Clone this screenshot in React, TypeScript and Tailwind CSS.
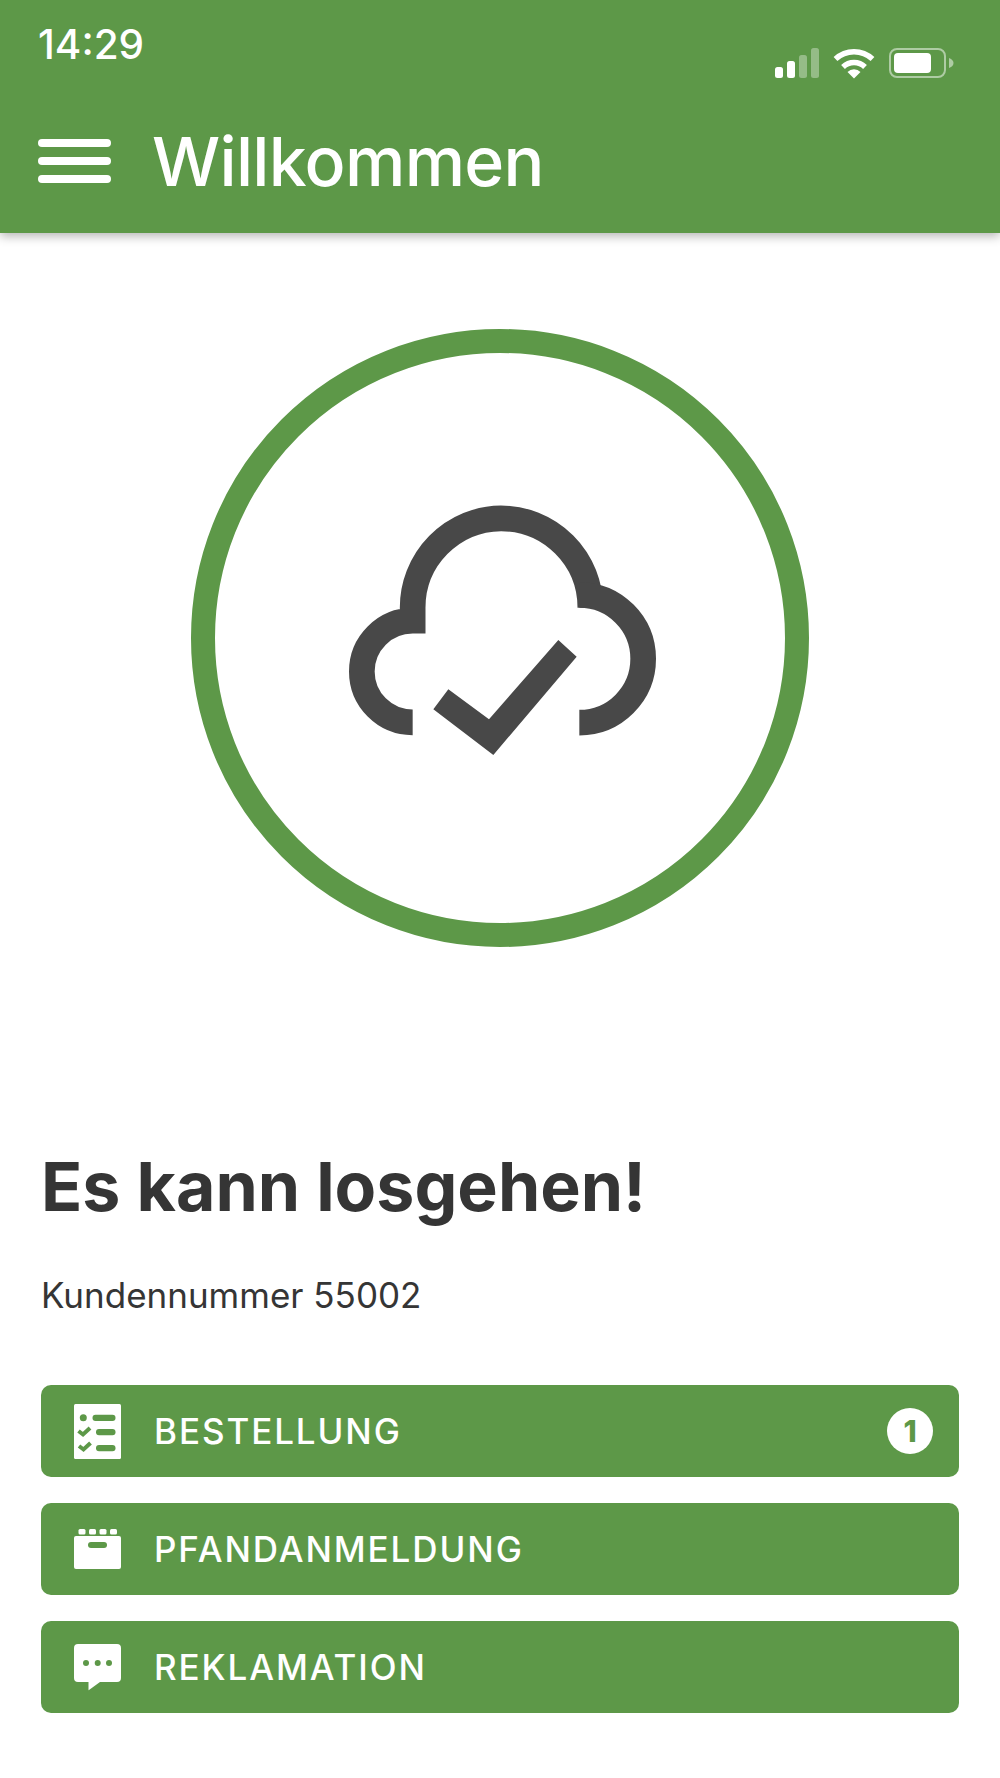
const inter = "font-['Inter','Liberation_Sans',sans-serif]";

function SignalIcon() {
  return (
    <svg width="44" height="30" viewBox="0 0 44 30" fill="white">
      <rect x="0" y="19" width="8" height="11" rx="2.5" />
      <rect x="12" y="13" width="8" height="17" rx="2.5" />
      <rect x="24" y="7" width="8" height="23" rx="2.5" opacity="0.35" />
      <rect x="36" y="0" width="8" height="30" rx="2.5" opacity="0.35" />
    </svg>
  );
}

function WifiIcon() {
  return (
    <svg width="42" height="32" viewBox="0 0 42 32" fill="none" stroke="white" strokeWidth="5.5">
      <path d="M2.5 12 A27 27 0 0 1 39.5 12" />
      <path d="M10 20 A16 16 0 0 1 32 20" />
      <path d="M21 31.5 L14.5 25 A9 9 0 0 1 27.5 25 Z" fill="white" stroke="none" />
    </svg>
  );
}

function BatteryIcon() {
  return (
    <svg width="66" height="30" viewBox="0 0 66 30" fill="none">
      <rect x="1" y="1" width="55" height="28" rx="7" stroke="white" strokeOpacity="0.5" strokeWidth="2" />
      <rect x="5" y="5" width="37" height="20" rx="4" fill="white" />
      <path d="M60 10 C63 11 64.500 13 64.500 15 C64.500 17 63 19 60 20 Z" fill="white" fillOpacity="0.5" />
    </svg>
  );
}

function CloudCheck() {
  return (
    <svg width="360" height="300" viewBox="0 0 1080 900" fill="none" className="mb-[16px]">
      <path
        d="M278 727 A152 152 0 0 1 278 422 L278 385 A268 268 0 0 1 543 115 A268 268 0 0 1 811 383"
        stroke="#484848"
        strokeWidth="77"
      />
      <path d="M778 345 A191 191 0 0 1 778 728" stroke="#484848" strokeWidth="77" />
      <path d="M385 628 L507 718 L715 480 L770 530 L520 825 L340 688 Z" fill="#484848" />
    </svg>
  );
}

function ListIcon() {
  return (
    <svg width="47" height="55" viewBox="0 0 47 55">
      <rect width="47" height="55" rx="1.500" fill="white" />
      <circle cx="9.300" cy="13.700" r="3.500" fill="#5d9848" />
      <rect x="18.500" y="10.700" width="23" height="6.300" rx="3" fill="#5d9848" />
      <path d="M4.500 27 L9 30.500 L16 24" fill="none" stroke="#5d9848" strokeWidth="4" />
      <rect x="22" y="25" width="19.500" height="6.300" rx="3" fill="#5d9848" />
      <path d="M5 42 L9.500 45.500 L16.500 39" fill="none" stroke="#5d9848" strokeWidth="4" />
      <rect x="22" y="41" width="19.500" height="6.300" rx="3" fill="#5d9848" />
    </svg>
  );
}

function CrateIcon() {
  return (
    <svg width="47" height="40" viewBox="0 0 47 40" fill="white">
      <rect x="4.500" y="0" width="7" height="5.500" rx="1.500" />
      <rect x="15" y="0" width="7" height="5.500" rx="1.500" />
      <rect x="25.500" y="0" width="7" height="5.500" rx="1.500" />
      <rect x="36" y="0" width="7" height="5.500" rx="1.500" />
      <path d="M2 7 H45 A2 2 0 0 1 47 9 V38 A2 2 0 0 1 45 40 H2 A2 2 0 0 1 0 38 V9 A2 2 0 0 1 2 7 Z" />
      <rect x="14" y="13" width="19" height="6" rx="3" fill="#5d9848" />
    </svg>
  );
}

function ChatIcon() {
  return (
    <svg width="47" height="47" viewBox="0 0 47 47">
      <path
        d="M4 0 H43 A4 4 0 0 1 47 4 V34 A4 4 0 0 1 43 38 H26 L15 46 Q14.500 47 14.500 45 V38 H4 A4 4 0 0 1 0 34 V4 A4 4 0 0 1 4 0 Z"
        fill="white"
      />
      <circle cx="12" cy="19" r="3" fill="#5d9848" />
      <circle cx="23.700" cy="19" r="3" fill="#5d9848" />
      <circle cx="35" cy="19" r="3" fill="#5d9848" />
    </svg>
  );
}

function ActionButton({
  label,
  icon,
  badge,
}: {
  label: string;
  icon: React.ReactNode;
  badge?: number;
}) {
  return (
    <button className="flex h-[92px] w-full items-center rounded-[10px] bg-[#5d9848] pl-[33px] pr-[26px] text-white">
      <span className="flex w-[80px] shrink-0 justify-start">{icon}</span>
      <span className="text-[35px] font-[450] leading-none tracking-[1.9px]">{label}</span>
      {badge != null && (
        <span className="ml-auto flex h-[46px] w-[46px] items-center justify-center rounded-full bg-white text-[30px] font-extrabold leading-none text-[#5d9848]">
          {badge}
        </span>
      )}
    </button>
  );
}

export default function App() {
  return (
    <div className={`${inter} flex h-[1778px] w-[1000px] flex-col bg-white`}>
      {/* Kopfzeile */}
      <header className="relative h-[233px] shrink-0 bg-[#5d9848] px-[38px] text-white shadow-[0_3px_10px_rgba(0,0,0,0.3)]">
        <div className="flex items-start justify-between">
          <span className="mt-[22px] text-[40.500px] font-medium leading-[46px]">14:29</span>
          <div className="mr-[7px] mt-[47px] flex items-center gap-[14px]">
            <SignalIcon />
            <WifiIcon />
            <BatteryIcon />
          </div>
        </div>
        <div className="mt-[42px] flex items-center gap-[41px]">
          <div className="flex w-[73px] flex-col gap-[10px]">
            <div className="h-[8px] rounded-full bg-white" />
            <div className="h-[8px] rounded-full bg-white" />
            <div className="h-[8px] rounded-full bg-white" />
          </div>
          <h1 className="text-[68px] font-[450] leading-[80px] tracking-[-0.7px]">Willkommen</h1>
        </div>
      </header>

      <main className="flex flex-col items-stretch px-[41px]">
        <div className="mt-[96px] flex justify-center">
          <div className="flex h-[618px] w-[618px] items-center justify-center rounded-full border-[24px] border-[#5d9848]">
            <CloudCheck />
          </div>
        </div>

        <h2 className="mt-[199px] text-[68px] font-bold leading-[80px] text-[#353535]">Es kann losgehen!</h2>
        <p className="mt-[49px] text-[35px] leading-[40px] text-[#353535]">Kundennummer 55002</p>

        <div className="mt-[70px] flex flex-col gap-[26px]">
          <ActionButton label="BESTELLUNG" icon={<ListIcon />} badge={1} />
          <ActionButton label="PFANDANMELDUNG" icon={<CrateIcon />} />
          <ActionButton label="REKLAMATION" icon={<ChatIcon />} />
        </div>
      </main>
    </div>
  );
}
